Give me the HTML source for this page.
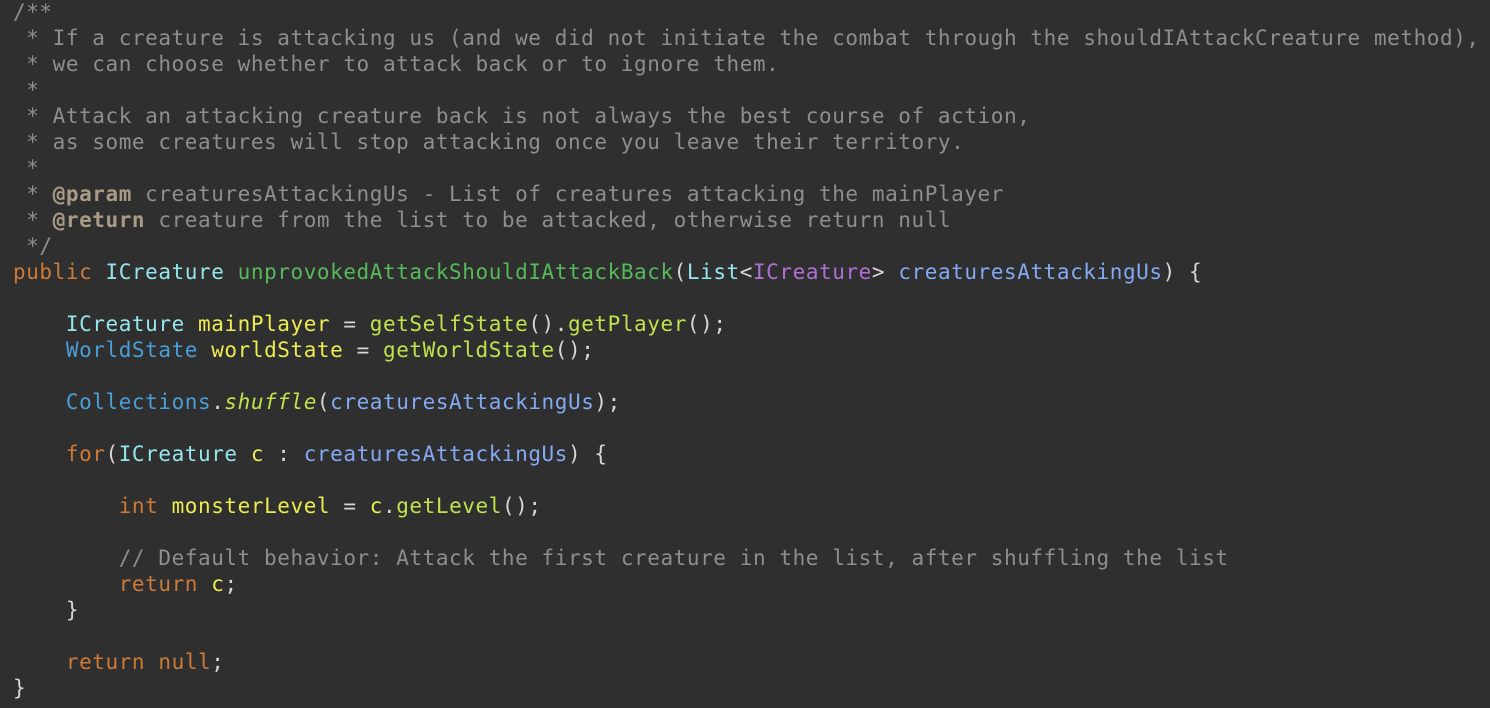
<!DOCTYPE html>
<html><head><meta charset="utf-8"><style>
html,body{margin:0;padding:0;background:#2f2f2f;width:1490px;height:708px;overflow:hidden}
pre{margin:0;padding:0 0 0 13px;position:relative;top:-1px;font-family:"DejaVu Sans Mono","Liberation Mono",monospace;font-size:21px;line-height:26px;color:#d6d6d6;white-space:pre;letter-spacing:0.57px}
.c{color:#8e8e8e}.t{color:#a99a84;font-weight:bold}
.k{color:#cc7a38}.ty{color:#94e6ec}.m{color:#56b95a}.g{color:#b06fd6}
.p{color:#82a9f2}.v{color:#ecec50;}.f{color:#c0e24c}.b{color:#4a9ed6}
.i{font-style:italic;color:#c0e24c}
</style></head><body><pre><span class="c">/**
 * If a creature is attacking us (and we did not initiate the combat through the shouldIAttackCreature method),
 * we can choose whether to attack back or to ignore them.
 *
 * Attack an attacking creature back is not always the best course of action,
 * as some creatures will stop attacking once you leave their territory.
 *
 * <span class="t">@param</span> creaturesAttackingUs - List of creatures attacking the mainPlayer
 * <span class="t">@return</span> creature from the list to be attacked, otherwise return null
 */</span>
<span class="k">public</span> <span class="ty">ICreature</span> <span class="m">unprovokedAttackShouldIAttackBack</span>(<span class="ty">List</span>&lt;<span class="g">ICreature</span>&gt; <span class="p">creaturesAttackingUs</span>) {

    <span class="ty">ICreature</span> <span class="v">mainPlayer</span> = <span class="f">getSelfState</span>().<span class="f">getPlayer</span>();
    <span class="b">WorldState</span> <span class="v">worldState</span> = <span class="f">getWorldState</span>();

    <span class="b">Collections</span>.<span class="i">shuffle</span>(<span class="p">creaturesAttackingUs</span>);

    <span class="k">for</span>(<span class="ty">ICreature</span> <span class="v">c</span> : <span class="p">creaturesAttackingUs</span>) {

        <span class="k">int</span> <span class="v">monsterLevel</span> = <span class="v">c</span>.<span class="f">getLevel</span>();

        <span class="c">// Default behavior: Attack the first creature in the list, after shuffling the list</span>
        <span class="k">return</span> <span class="v">c</span>;
    }

    <span class="k">return null</span>;
}</pre></body></html>
